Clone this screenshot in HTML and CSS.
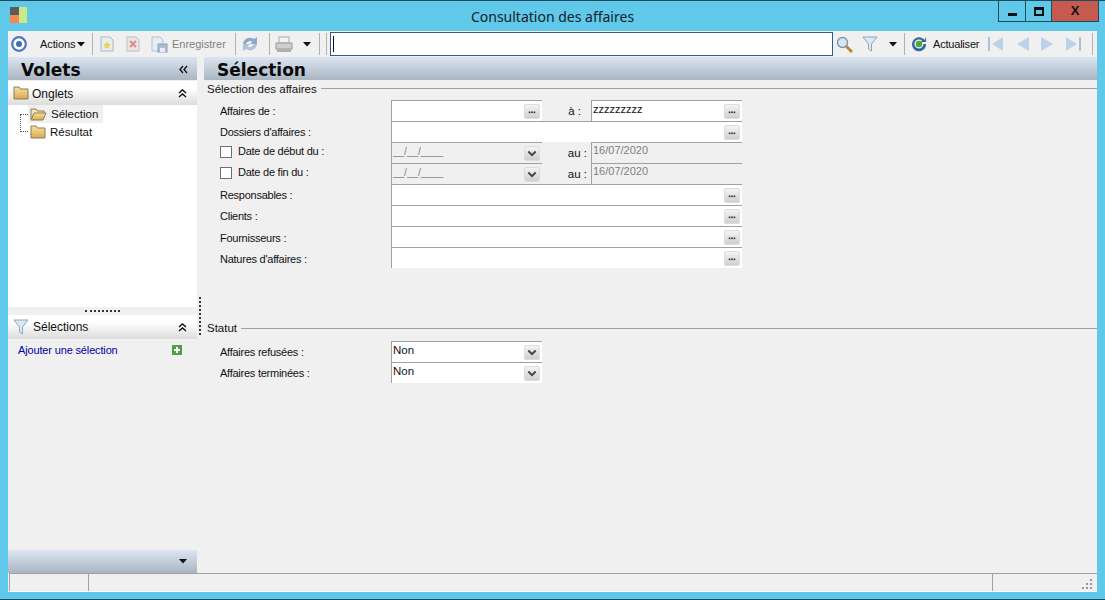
FILE: index.html
```html
<!DOCTYPE html>
<html lang="fr">
<head>
<meta charset="utf-8">
<title>Consultation des affaires</title>
<link rel="stylesheet" href="styles.css">
</head>
<body>
<svg class="defs" width="0" height="0">
  <defs>
    <linearGradient id="gold" x1="0" y1="0" x2="0" y2="1"><stop offset="0" stop-color="#f6e2a8"/><stop offset="1" stop-color="#d9a94c"/></linearGradient>
    <symbol id="dots" viewBox="0 0 16 16"><rect x="4" y="8" width="2" height="2" fill="#333"/><rect x="7" y="8" width="2" height="2" fill="#333"/><rect x="10" y="8" width="2" height="2" fill="#333"/></symbol>
    <symbol id="chev" viewBox="0 0 16 16"><path d="M3.500 5.500L8 10l4.500-4.500" fill="none" stroke="#444" stroke-width="2.400"/></symbol>
    <symbol id="folder" viewBox="0 0 16 14"><path d="M1 1h5l1.500 2H15v10H1z" fill="url(#gold)" stroke="#8a7a55"/></symbol>
    <symbol id="folderopen" viewBox="0 0 17 14"><path d="M1 12V2h5l1.500 2H14v2" fill="#f6e4b0" stroke="#8a7a55"/><path d="M1 13l3-7h12l-3 7z" fill="url(#gold)" stroke="#8a7a55"/></symbol>
    <symbol id="funnel" viewBox="0 0 16 16"><path d="M1 1h14L9.500 8v7l-3-2V8z" fill="#dbe8f4" stroke="#8fa6bc"/></symbol>
    <symbol id="up2" viewBox="0 0 9 9"><path d="M1 4l3.500-3L8 4M1 8l3.500-3L8 8" fill="none" stroke="#111" stroke-width="1.400"/></symbol>
    <symbol id="left2" viewBox="0 0 9 9"><path d="M4 1L1 4.500 4 8M8 1L5 4.500 8 8" fill="none" stroke="#111" stroke-width="1.300"/></symbol>
    <symbol id="caret" viewBox="0 0 8 5"><path d="M0 0h8L4 4.500z" fill="#111"/></symbol>
  </defs>
</svg>
<div class="window">
  <header class="titlebar">
    <svg class="applogo" width="17" height="16" viewBox="0 0 17 16"><rect x="0" y="0" width="9" height="8" fill="#5b5b5b"/><rect x="0" y="8" width="9" height="8" fill="#f08a50"/><rect x="9" y="0" width="8" height="16" fill="#c9e88a"/></svg>
    <h1 class="title">Consultation des affaires</h1>
    <div class="winbtns">
      <div class="winbtn wb-min"><span class="glyph-min"></span></div>
      <div class="winbtn wb-max"><span class="glyph-max"></span></div>
      <div class="winbtn wb-close">X</div>
    </div>
  </header>

  <div class="client">
    <div class="toolbar">
      <svg class="t-ring" width="16" height="16" viewBox="0 0 16 16"><circle cx="8" cy="8" r="6.800" fill="#fff" stroke="#4a78bb" stroke-width="2.200"/><circle cx="8" cy="8" r="3" fill="#3f6fb5"/></svg>
      <span class="t-actions">Actions</span>
      <svg class="t-caret1" width="8" height="5"><use href="#caret"/></svg>
      <span class="sep s1"></span>
      <svg class="t-new" width="14" height="16" viewBox="0 0 14 16"><path d="M1 1h9l3 3v11H1z" fill="#e6edf5" stroke="#a9b6c6"/><path d="M7 5l1.300 2.700 2.700.3-2 2 .6 2.800L7 11.500 4.400 12.800 5 10 3 8l2.700-.3z" fill="#f2d04e"/></svg>
      <svg class="t-del" width="14" height="16" viewBox="0 0 14 16"><path d="M1 1h9l3 3v11H1z" fill="#e9e6ea" stroke="#c0bcc4"/><path d="M4 5l6 6M10 5l-6 6" stroke="#e08a8a" stroke-width="2"/></svg>
      <svg class="t-save" width="17" height="17" viewBox="0 0 17 17"><path d="M1 1h8l3 3v11H1z" fill="#e6edf5" stroke="#b5c0cc"/><rect x="7" y="8" width="9" height="8" fill="#a9bdd6" stroke="#8aa0bb"/><rect x="9" y="12" width="5" height="4" fill="#e6edf5"/></svg>
      <span class="t-enr">Enregistrer</span>
      <span class="sep s2"></span>
      <svg class="t-sync" width="16" height="18" viewBox="0 0 16 18"><path d="M1 9a7 7 0 0 1 11-5l3-2v7H8l2.500-2.500A4.500 4.500 0 0 0 4 9z" fill="#8aa8cc"/><path d="M15 9a7 7 0 0 1-11 5l-3 2V9h7l-2.500 2.500A4.500 4.500 0 0 0 12 9z" fill="#aec2da"/></svg>
      <span class="sep s3"></span>
      <svg class="t-print" width="18" height="17" viewBox="0 0 18 17"><rect x="4" y="1" width="10" height="6" fill="#f4f4f4" stroke="#a8a8a8"/><rect x="1" y="7" width="16" height="6" fill="#cfcfcf" stroke="#9a9a9a"/><rect x="2" y="13" width="14" height="3" fill="#b0b0b0"/></svg>
      <svg class="t-caret2" width="8" height="5"><use href="#caret"/></svg>
      <span class="sep s4"></span>
      <span class="sep s5"></span>
      <div class="t-search"><span class="cursor"></span></div>
      <svg class="t-lens" width="17" height="17" viewBox="0 0 17 17"><path d="M10 10l6 6" stroke="#b58a35" stroke-width="3"/><circle cx="6.500" cy="6.500" r="5" fill="#d6e6f6" stroke="#7f93a8" stroke-width="1.300"/></svg>
      <svg class="t-funnel" width="16" height="16"><use href="#funnel"/></svg>
      <svg class="t-caret3" width="8" height="5"><use href="#caret"/></svg>
      <span class="sep s6"></span>
      <svg class="t-refresh" width="16" height="16" viewBox="0 0 16 16"><path d="M13.500 4A7 7 0 1 0 15 8h-2.500A4.500 4.500 0 1 1 11 4.600L9.500 6H15V1z" fill="#36689f"/><circle cx="8" cy="8" r="3.200" fill="#4aa83c"/></svg>
      <span class="t-act">Actualiser</span>
      <svg class="t-first" width="15" height="14" viewBox="0 0 15 14"><rect x="0" y="0" width="2" height="14" fill="#a9c3de"/><path d="M15 0v14L4 7z" fill="#bcd2e8"/></svg>
      <svg class="t-prev" width="13" height="14" viewBox="0 0 13 14"><path d="M13 0v14L1 7z" fill="#bcd2e8"/></svg>
      <svg class="t-next" width="13" height="14" viewBox="0 0 13 14"><path d="M0 0v14l12-7z" fill="#bcd2e8"/></svg>
      <svg class="t-last" width="15" height="14" viewBox="0 0 15 14"><rect x="13" y="0" width="2" height="14" fill="#a9c3de"/><path d="M0 0v14l11-7z" fill="#bcd2e8"/></svg>
      <span class="sep s7"></span>
    </div>

    <div class="main">
      <aside class="pane">
        <div class="band volets"><span class="band-title">Volets</span><svg class="collapse" width="9" height="9"><use href="#left2"/></svg></div>
        <div class="group onglets">
          <svg class="g-icon" width="16" height="14"><use href="#folder"/></svg>
          <span class="g-label">Onglets</span>
          <svg class="g-toggle" width="9" height="9"><use href="#up2"/></svg>
        </div>
        <div class="tree">
          <div class="tree-lines"></div>
          <div class="tree-item selected">
            <svg class="tree-icon" width="17" height="14"><use href="#folderopen"/></svg>
            <span>Sélection</span>
          </div>
          <div class="tree-item">
            <svg class="tree-icon" width="16" height="14"><use href="#folder"/></svg>
            <span>Résultat</span>
          </div>
        </div>
        <div class="hsplit"><span class="hsplit-dots"></span></div>
        <div class="group selections">
          <svg class="g-icon" width="16" height="16"><use href="#funnel"/></svg>
          <span class="g-label">Sélections</span>
          <svg class="g-toggle" width="9" height="9"><use href="#up2"/></svg>
        </div>
        <div class="addrow">
          <a class="addlink">Ajouter une sélection</a>
          <svg class="addicon" width="10" height="10" viewBox="0 0 10 10"><rect width="10" height="10" fill="#4f9e4a"/><path d="M5 2v6M2 5h6" stroke="#fff" stroke-width="2"/></svg>
        </div>
        <div class="band paneend"><svg class="endcaret" width="8" height="5"><use href="#caret"/></svg></div>
      </aside>

      <div class="vsplit"><span class="vsplit-dots"></span></div>

      <section class="content">
        <div class="band"><span class="band-title">Sélection</span></div>

        <div class="legend l1"><span>Sélection des affaires</span><i></i></div>
        <div class="form">
          <label class="lab">Affaires de :</label>
          <div class="field"><svg class="btn"><use href="#dots"/></svg></div>
          <label class="lab2 a">à :</label>
          <div class="field"><span class="val zz">zzzzzzzzz</span><svg class="btn"><use href="#dots"/></svg></div>

          <label class="lab">Dossiers d'affaires :</label>
          <div class="field wide"><svg class="btn"><use href="#dots"/></svg></div>

          <label class="lab chk"><span class="box"></span>Date de début du :</label>
          <div class="field off"><span class="val mask">__/__/____</span><span class="drop"><svg><use href="#chev"/></svg></span></div>
          <label class="lab2">au :</label>
          <div class="field off"><span class="val date">16/07/2020</span></div>

          <label class="lab chk"><span class="box"></span>Date de fin du :</label>
          <div class="field off"><span class="val mask">__/__/____</span><span class="drop"><svg><use href="#chev"/></svg></span></div>
          <label class="lab2">au :</label>
          <div class="field off"><span class="val date">16/07/2020</span></div>

          <label class="lab">Responsables :</label>
          <div class="field wide"><svg class="btn"><use href="#dots"/></svg></div>
          <label class="lab">Clients :</label>
          <div class="field wide"><svg class="btn"><use href="#dots"/></svg></div>
          <label class="lab low">Fournisseurs :</label>
          <div class="field wide"><svg class="btn"><use href="#dots"/></svg></div>
          <label class="lab low">Natures d'affaires :</label>
          <div class="field wide"><svg class="btn"><use href="#dots"/></svg></div>
        </div>

        <div class="legend l2"><span>Statut</span><i></i></div>
        <div class="form">
          <label class="lab">Affaires refusées :</label>
          <div class="field"><span class="val">Non</span><span class="drop"><svg><use href="#chev"/></svg></span></div>
          <span class="rest"></span>
          <label class="lab">Affaires terminées :</label>
          <div class="field"><span class="val">Non</span><span class="drop"><svg><use href="#chev"/></svg></span></div>
          <span class="rest"></span>
        </div>
      </section>
    </div>

    <footer class="statusbar">
      <div class="cell c1"></div>
      <div class="cell c2"></div>
      <div class="cell c3">
        <svg class="grip" width="11" height="11" viewBox="0 0 11 11" fill="#999"><rect x="8" y="0" width="2" height="2"/><rect x="4" y="4" width="2" height="2"/><rect x="8" y="4" width="2" height="2"/><rect x="0" y="8" width="2" height="2"/><rect x="4" y="8" width="2" height="2"/><rect x="8" y="8" width="2" height="2"/></svg>
      </div>
    </footer>
  </div>
</div>
</body>
</html>
```

FILE: styles.css
```css
* { box-sizing: border-box; }
html, body { margin: 0; padding: 0; }
body { width: 1105px; height: 600px; overflow: hidden; font-family: "Liberation Sans", Arial, sans-serif; font-size: 12px; color: #111; }
.defs { position: absolute; }

.window { width: 1105px; height: 600px; background: #60c8e8; border: 1px solid #1c4a5e; border-width: 1px 0 1px 0; display: flex; flex-direction: column; }

.titlebar { height: 30px; display: flex; align-items: flex-start; flex: none; }
.applogo { margin: 6px 0 0 10px; }
.title { flex: 1; margin: 7px 0 0; text-align: center; font: 400 14px/18px "Noto Sans", sans-serif; color: #10222c; padding-left: 80px; }
.winbtns { display: flex; margin-right: 6px; height: 21px; border: 1px solid #1c4a5e; border-top: 0; }
.winbtn { height: 20px; display: flex; align-items: center; justify-content: center; }
.wb-min { width: 27px; border-right: 1px solid #1c4a5e; }
.wb-max { width: 26px; border-right: 1px solid #1c4a5e; }
.wb-close { width: 46px; background: #c75a4e; font: 700 13px/20px "Liberation Sans", sans-serif; color: #111; }
.glyph-min { width: 9px; height: 3px; background: #111; margin-top: 6px; }
.glyph-max { width: 10px; height: 9px; border: 2px solid #111; border-top-width: 3px; }

.client { flex: 1; margin: 0 8px 7px; background: #f0f0f0; display: flex; flex-direction: column; min-height: 0; }

.toolbar { height: 26px; flex: none; display: flex; align-items: center; background: #f0f0f0; }
.toolbar svg { flex: none; }
.sep { width: 1px; height: 22px; background: #b0b0b0; flex: none; }
.t-ring { margin-left: 3px; }
.t-actions { margin-left: 13px; width: 35px; white-space: nowrap; font-size: 11px; letter-spacing: -0.1px; }
.t-caret1 { margin-left: 2px; }
.s1 { margin-left: 7px; }
.t-new { margin-left: 7px; }
.t-del { margin-left: 12px; }
.t-save { margin-left: 11px; }
.t-enr { margin-left: 4px; width: 54px; color: #808080; font-size: 11px; white-space: nowrap; }
.s2 { margin-left: 9px; }
.t-sync { margin-left: 6px; }
.s3 { margin-left: 11px; }
.t-print { margin-left: 5px; }
.t-caret2 { margin-left: 10px; }
.s4 { margin-left: 8px; }
.s5 { margin-left: 6px; }
.t-search { margin-left: 3px; width: 503px; height: 24px; background: #fff; border: 1px solid #2f5f86; padding: 3px 2px; }
.cursor { display: block; width: 1px; height: 16px; background: #111; }
.t-lens { margin-left: 3px; }
.t-funnel { margin-left: 9px; }
.t-caret3 { margin-left: 11px; }
.s6 { margin-left: 7px; }
.t-refresh { margin-left: 6px; }
.t-act { margin-left: 6px; width: 46px; font-size: 11px; letter-spacing: -0.2px; white-space: nowrap; }
.t-first { margin-left: 9px; }
.t-prev { margin-left: 13px; }
.t-next { margin-left: 12px; }
.t-last { margin-left: 12px; }
.s7 { margin-left: 11px; }

.main { flex: 1; display: flex; min-height: 0; }
.pane { width: 189px; flex: none; display: flex; flex-direction: column; }
.band { height: 23px; flex: none; background: linear-gradient(#dbe6f2, #a9b5c1); display: flex; align-items: center; }
.band-title { font: 700 17px/23px "DejaVu Sans", sans-serif; color: #0a0a0a; margin-left: 13px; padding-top: 3px; }
.volets { justify-content: space-between; margin-bottom: 1px; }
.collapse { margin-right: 9px; margin-top: 2px; }

.group { height: 24px; flex: none; background: linear-gradient(#ffffff 30%, #dcdcdc); display: flex; align-items: center; padding-left: 5px; }
.g-icon { flex: none; }
.g-label { margin-left: 3px; flex: 1; font-size: 12px; padding-top: 2px; }
.selections .g-label { margin-left: 4px; padding-top: 0; }
.g-toggle { margin-right: 10px; flex: none; }

.tree { height: 202px; flex: none; background: #fff; position: relative; padding-left: 20px; font-size: 11.500px; }
.tree-lines { position: absolute; left: 12px; top: 9px; width: 8px; height: 18px; border: 1px dotted #555; border-right: 0; }
.tree-item { display: flex; align-items: center; height: 18px; width: 75px; padding-left: 2px; gap: 4px; position: relative; }
.tree-item.selected { background: #f0f0f0; }
.tree-icon { flex: none; }

.hsplit { height: 8px; flex: none; background: #f0f0f0; display: flex; justify-content: center; align-items: flex-start; padding-top: 3px; }
.hsplit-dots { width: 35px; border-top: 2px dotted #333; display: block; }

.addrow { flex: 1; display: flex; justify-content: space-between; padding: 5px 15px 0 10px; }
.addlink { color: #0000a8; font-size: 11px; letter-spacing: -0.15px; line-height: 13px; }
.addicon { margin-top: 1px; }
.paneend { justify-content: flex-end; padding-right: 10px; }

.vsplit { width: 7px; flex: none; padding-left: 2px; }
.vsplit-dots { display: block; margin-top: 240px; height: 38px; border-left: 2px dotted #333; }

.content { flex: 1; min-width: 0; }
.legend { display: flex; align-items: center; height: 14px; padding-left: 3px; white-space: nowrap; font-size: 11.500px; }
.legend i { flex: 1; height: 1px; background: #a0a0a0; margin-left: 4px; }
.l1 { margin-top: 1px; }
.l1 span { padding-top: 2px; }
.l2 { margin-top: 53px; }
.form { display: grid; grid-template-columns: 171px 151px 49px 151px; grid-auto-rows: 21px; padding-left: 16px; margin-top: 5px; }
.l2 + .form { margin-top: 6px; }
.lab { display: flex; align-items: center; font-size: 11px; letter-spacing: -0.25px; line-height: 19px; padding-top: 2px; white-space: nowrap; }
.lab.low { padding-top: 4px; }
.lab2 { display: block; font-size: 11.500px; line-height: 23px; text-align: right; padding-right: 4px; }
.lab2.a { padding-right: 10px; }
.lab.chk { gap: 6px; padding-top: 0; padding-bottom: 2px; }
.box { width: 12px; height: 12px; background: #fff; border: 1px solid #707070; flex: none; }
.field { background: #fff; border-top: 1px solid #a0a0a0; border-left: 1px solid #a0a0a0; display: flex; align-items: flex-start; justify-content: space-between; }
.wide { grid-column: 2 / 5; }
.off { background: #f0f0f0; }
.val { font: 11.500px/16px "Liberation Sans", sans-serif; padding-left: 1px; }
.zz { font-size: 11px; }
.date { color: #808080; font-size: 11px; line-height: 14px; }
.mask { color: #808080; line-height: 18px; font-size: 10px; }
.btn, .drop { width: 16px; height: 15px; margin: 3px 2px 0 auto; background: linear-gradient(#f4f4f4, #cfcfcf); border: 1px solid #dcdcdc; border-radius: 2px; flex: none; display: block; }
.drop svg { display: block; width: 14px; height: 13px; }
.rest { grid-column: 3 / 5; }

.statusbar { height: 19px; flex: none; display: flex; padding-left: 1px; border-bottom: 1px solid #fff; }
.cell { border-top: 1px solid #a0a0a0; border-left: 1px solid #a0a0a0; height: 18px; }
.c1 { width: 79px; }
.c2 { width: 904px; }
.c3 { flex: 1; display: flex; justify-content: flex-end; align-items: flex-end; padding: 0 4px 1px 0; }
.grip { display: block; }
```
